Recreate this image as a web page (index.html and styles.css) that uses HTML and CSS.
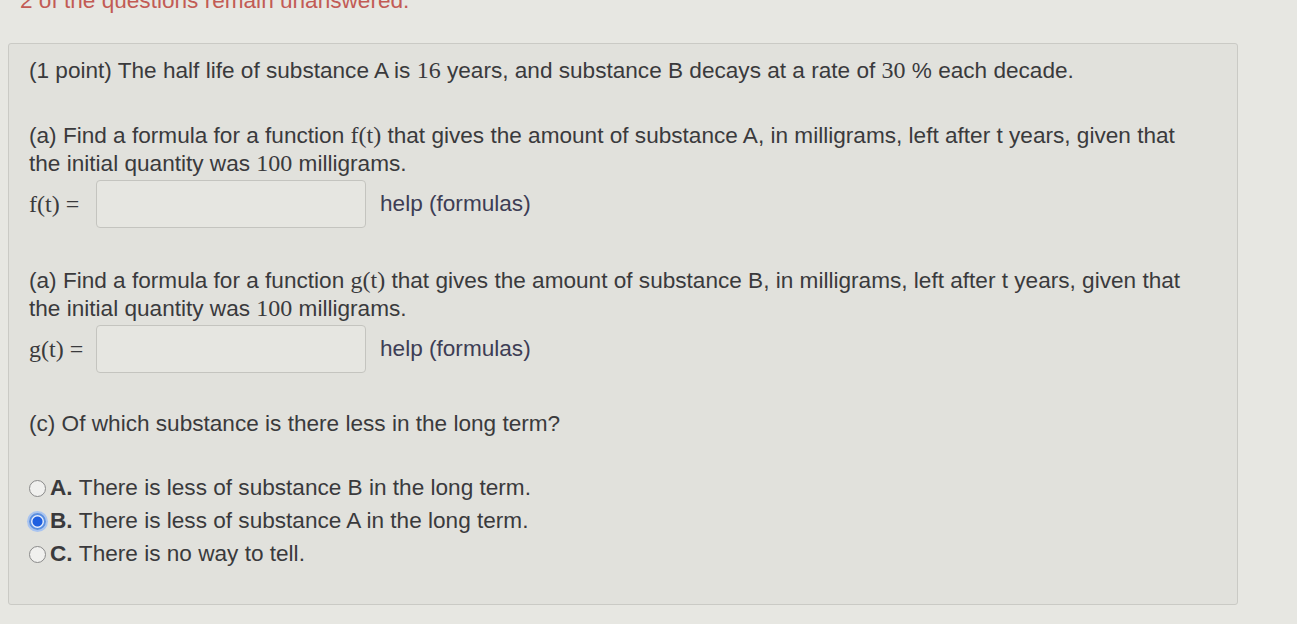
FILE: index.html
```html
<!DOCTYPE html>
<html>
<head>
<meta charset="utf-8">
<link rel="stylesheet" href="styles.css">
</head>
<body>
<div class="notice">2 of the questions remain unanswered.</div>
<div class="problem">
  <p class="para">(1 point) The half life of substance A is <span class="m">16</span> years, and substance B decays at a rate of <span class="m">30</span> % each decade.</p>

  <p class="para part">(a) Find a formula for a function <span class="m">f(t)</span> that gives the amount of substance A, in milligrams, left after t years, given that the initial quantity was <span class="m">100</span> milligrams.</p>
  <div class="answer">
    <span class="m lbl">f(t) =</span>
    <span class="box"></span>
    <span class="help">help (formulas)</span>
  </div>

  <p class="para part2">(a) Find a formula for a function <span class="m">g(t)</span> that gives the amount of substance B, in milligrams, left after t years, given that the initial quantity was <span class="m">100</span> milligrams.</p>
  <div class="answer">
    <span class="m lbl">g(t) =</span>
    <span class="box"></span>
    <span class="help">help (formulas)</span>
  </div>

  <p class="para part3">(c) Of which substance is there less in the long term?</p>

  <div class="choices">
    <div class="choice"><span class="radio"></span><b>A.</b>&nbsp;There is less of substance B in the long term.</div>
    <div class="choice"><span class="radio on"></span><b>B.</b>&nbsp;There is less of substance A in the long term.</div>
    <div class="choice"><span class="radio"></span><b>C.</b>&nbsp;There is no way to tell.</div>
  </div>
</div>
</body>
</html>
```
FILE: styles.css
```css
html, body {
  margin: 0;
  padding: 0;
}
body {
  background: #e7e7e2;
  font-family: "Liberation Sans", Arial, sans-serif;
  color: #3a3a3c;
  font-size: 22.6px;
  overflow: hidden;
  height: 624px;
}
.notice {
  color: #c25b55;
  font-size: 22.6px;
  line-height: 24px;
  margin-top: -11px;
  padding-left: 20px;
}
.problem {
  margin: 30px 59px 0 8px;
  height: 562px;
  box-sizing: border-box;
  border: 1px solid #cacac5;
  border-radius: 3px;
  background: #e1e1dc;
  padding: 13px 20px 0 20px;
}
.para {
  margin: 0;
  line-height: 28px;
  max-width: 1165px;
}
.part {
  margin-top: 37px;
}
.part2 {
  margin-top: 38px;
}
.part3 {
  margin-top: 36px;
}
.m {
  font-family: "Liberation Serif", "Times New Roman", serif;
  font-size: 24px;
  line-height: 1;
}
.answer {
  display: flex;
  align-items: center;
  margin-top: 1px;
  height: 50px;
}
.lbl {
  width: 67px;
}
.box {
  width: 268px;
  height: 46px;
  border: 1px solid #c4c4bf;
  border-radius: 4px;
  background: #e6e6e1;
}
.help {
  margin-left: 14px;
  color: #3d3d55;
}
.choices {
  margin-top: 34px;
  display: flex;
  flex-direction: column;
  gap: 1px;
}
.choice {
  display: flex;
  align-items: center;
  line-height: 32px;
}
.choice b {
  font-weight: bold;
}
.radio {
  width: 17px;
  height: 17px;
  border: 1px solid #8a8a8a;
  border-radius: 50%;
  background: #f0f0ee;
  margin-right: 4px;
  margin-left: 0;
  box-sizing: border-box;
}
.radio.on {
  border: 2px solid #5b8fe0;
  background: radial-gradient(circle, #1f5fe0 0 4.5px, #e8eefc 5.5px);
  box-shadow: 0 0 0 2px #a9c4f0;
}
```
